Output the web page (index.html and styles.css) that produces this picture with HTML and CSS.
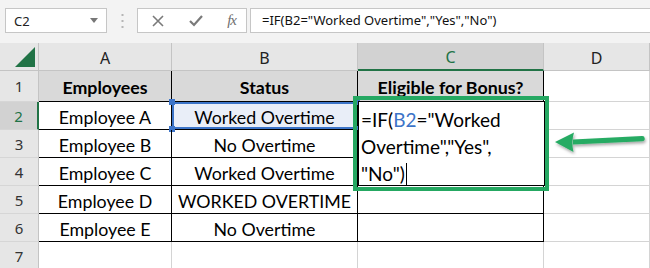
FILE: index.html
```html
<!DOCTYPE html>
<html lang="en">
<head>
    <meta charset="UTF-8">
    <meta name="viewport" content="width=device-width, initial-scale=1.0">
    <title>Eligible for Bonus</title>
    <link rel="stylesheet" href="styles.css">
</head>
<body>
    <div class="toolbar">
        <div class="namebox">
            <span>C2</span>
            <svg class="dropdown" width="8" height="5" viewBox="0 0 8 5"><path d="M0 0h8L4 5z" fill="#777"/></svg>
        </div>
        <div class="grip">
            <svg width="3" height="14" viewBox="0 0 3 14">
                <rect x="0.5" y="0" width="2" height="2" fill="#b5b5b5"/>
                <rect x="0.5" y="6" width="2" height="2" fill="#b5b5b5"/>
                <rect x="0.5" y="12" width="2" height="2" fill="#b5b5b5"/>
            </svg>
        </div>
        <div class="fbuttons">
            <svg width="12" height="12" viewBox="0 0 12 12"><path d="M1 1l10 10M11 1L1 11" stroke="#7a7a7a" stroke-width="1.6"/></svg>
            <svg width="14" height="12" viewBox="0 0 14 12"><path d="M1 6l4 4 8-9" stroke="#7a7a7a" stroke-width="2.2" fill="none"/></svg>
            <span class="fx">fx</span>
        </div>
        <div class="formula">=IF(B2="Worked Overtime","Yes","No")</div>
    </div>

    <div class="sheet">
        <div class="corner"><svg width="20" height="20" viewBox="0 0 20 20"><path d="M20 0V20H0z" fill="#217346"/></svg></div>
        <div class="colhead">A</div>
        <div class="colhead">B</div>
        <div class="colhead active">C</div>
        <div class="colhead">D</div>

        <div class="rowhead">1</div>
        <div class="cell d title">Employees</div>
        <div class="cell d title">Status</div>
        <div class="cell d title">Eligible for Bonus?</div>
        <div class="cell"></div>

        <div class="rowhead active">2</div>
        <div class="cell d">Employee A</div>
        <div class="cell d ref">
            Worked Overtime
            <span class="handle tl"></span>
            <span class="handle tr"></span>
            <span class="handle bl"></span>
            <span class="handle br"></span>
        </div>
        <div class="cell d edit">
            <div class="editor">=IF(<span class="refname">B2</span>="Worked<br>Overtime","Yes",<br>"No")<span class="caret"></span></div>
            <div class="callout"></div>
            <svg class="arrow" width="96" height="30" viewBox="0 0 96 30">
                <defs>
                    <filter id="shade" x="-10%" y="-30%" width="130%" height="180%">
                        <feDropShadow dx="1" dy="2" stdDeviation="1.5" flood-color="#000" flood-opacity="0.35"/>
                    </filter>
                </defs>
                <g filter="url(#shade)" fill="#27ab63">
                    <path d="M20 11.5L89 8a2.6 2.6 0 0 1 0.3 5.2L20 16.5z"/>
                    <path d="M2 14L21 4.5Q18 14 20.5 24z"/>
                </g>
            </svg>
        </div>
        <div class="cell"></div>

        <div class="rowhead">3</div>
        <div class="cell d">Employee B</div>
        <div class="cell d">No Overtime</div>
        <div class="cell d"></div>
        <div class="cell"></div>

        <div class="rowhead">4</div>
        <div class="cell d">Employee C</div>
        <div class="cell d">Worked Overtime</div>
        <div class="cell d"></div>
        <div class="cell"></div>

        <div class="rowhead">5</div>
        <div class="cell d">Employee D</div>
        <div class="cell d">WORKED OVERTIME</div>
        <div class="cell d"></div>
        <div class="cell"></div>

        <div class="rowhead">6</div>
        <div class="cell d">Employee E</div>
        <div class="cell d">No Overtime</div>
        <div class="cell d"></div>
        <div class="cell"></div>

        <div class="rowhead">7</div>
        <div class="cell"></div>
        <div class="cell"></div>
        <div class="cell"></div>
        <div class="cell"></div>
    </div>
</body>
</html>
```

FILE: styles.css
```css
* {
    margin: 0;
    padding: 0;
    box-sizing: border-box;
}

body {
    width: 650px;
    height: 268px;
    overflow: hidden;
    background: #fff;
    font-family: 'Noto Sans', 'Open Sans', sans-serif;
    color: #000;
}

/* formula bar */
.toolbar {
    display: flex;
    align-items: center;
    height: 43px;
    padding: 0 0 2px 5px;
    background: #f3f3f3;
}

.namebox {
    display: flex;
    align-items: center;
    justify-content: space-between;
    width: 102px;
    height: 25px;
    padding: 0 8px 0 8px;
    background: #fff;
    border: 1px solid #c6c6c6;
    font-size: 13px;
    color: #222;
}

.grip {
    display: flex;
    justify-content: center;
    width: 30px;
}

.fbuttons {
    display: flex;
    align-items: center;
    justify-content: space-between;
    width: 110px;
    height: 25px;
    padding: 0 10px 0 14px;
    background: #fff;
    border: 1px solid #c6c6c6;
}

.fx {
    font-family: 'Liberation Serif', serif;
    font-style: italic;
    font-size: 15px;
    color: #6f6f6f;
    letter-spacing: -1px;
}

.formula {
    flex: 1;
    height: 25px;
    margin-left: 3px;
    margin-right: -2px;
    padding-left: 11px;
    background: #fff;
    border: 1px solid #c6c6c6;
    font-size: 13px;
    line-height: 23px;
    color: #111;
    white-space: nowrap;
}

/* worksheet */
.sheet {
    display: grid;
    grid-template-columns: 39px 133px 186px 186px 1fr;
    grid-template-rows: 28px 31px repeat(6, 28px);
}

.corner,
.colhead,
.rowhead {
    display: flex;
    align-items: center;
    justify-content: center;
    background: #e6e6e6;
    border-right: 1px solid #c4c4c4;
    border-bottom: 1px solid #c4c4c4;
    font-size: 16px;
    color: #222;
}

.corner {
    align-items: flex-end;
    justify-content: flex-end;
    padding: 0 3px 3px 0;
}

.colhead {
    padding-top: 2px;
}

.colhead.active {
    background: #d2d2d2;
    border-bottom: 2px solid #217346;
    color: #217346;
}

.rowhead {
    font-size: 15px;
    color: #333;
    border-bottom-color: #d6d6d6;
}

.rowhead.active {
    background: #d2d2d2;
    border-right: 2px solid #217346;
    color: #217346;
}

.cell {
    position: relative;
    display: flex;
    align-items: center;
    justify-content: center;
    border-right: 1px solid #d4d4d4;
    border-bottom: 1px solid #d4d4d4;
    font-family: Lato, 'Open Sans', sans-serif;
    font-size: 17.8px;
    white-space: nowrap;
    padding-top: 2px;
}

.cell.d {
    border-right-color: #000;
    border-bottom-color: #000;
}

.cell.title {
    background: #d9d9d9;
    font-weight: 700;
}

/* B2 referenced by the formula */
.cell.ref {
    background: #e9eef8;
    box-shadow: inset 0 0 0 2px #3c74c8;
}

.handle {
    position: absolute;
    width: 6px;
    height: 6px;
    background: #3c74c8;
}

.handle.tl { top: -3px; left: -3px; }
.handle.tr { top: -3px; right: -3px; }
.handle.bl { bottom: -3px; left: -3px; }
.handle.br { bottom: -3px; right: -3px; }

/* C2 in edit mode */
.cell.edit {
    justify-content: flex-start;
}

.editor {
    position: absolute;
    top: -1px;
    left: 0;
    width: 187px;
    height: 85px;
    padding: 4px 0 0 2px;
    background: #fff;
    border: 1px solid #000;
    font-size: 19px;
    line-height: 27px;
    z-index: 1;
}

.refname {
    color: #3c74c8;
}

.caret {
    display: inline-block;
    width: 1px;
    height: 23px;
    margin-left: 1px;
    vertical-align: -5px;
    background: #000;
}

.callout {
    position: absolute;
    top: -6px;
    left: -5px;
    width: 196px;
    height: 95px;
    border: 4px solid #25a862;
    z-index: 2;
}

.arrow {
    position: absolute;
    top: 26px;
    left: 195px;
    z-index: 2;
}
```
